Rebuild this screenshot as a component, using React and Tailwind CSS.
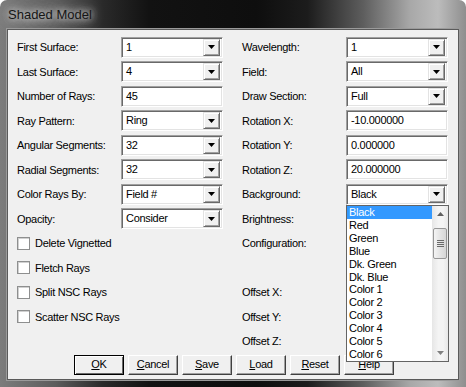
import React from "react";

const Arrow = ({ color = "#000" }) => (
  <svg width="7" height="4" viewBox="0 0 7 4">
    <path d="M0 0h7L3.5 4z" fill={color} />
  </svg>
);

const DropButton = () => (
  <div className="ml-auto w-[17px] h-[17px] bg-[#f0f0f0] flex items-center justify-center border border-t-[#e3e3e3] border-l-[#e3e3e3] border-b-[#696969] border-r-[#696969] shadow-[inset_1px_1px_0_#ffffff,inset_-1px_-1px_0_#a0a0a0]">
    <Arrow />
  </div>
);

const Field = ({ value, combo = false }) => (
  <div className="w-[102px] h-[21px] bg-white flex items-center border border-t-[#a0a0a0] border-l-[#a0a0a0] border-b-white border-r-white shadow-[inset_1px_1px_0_#696969,inset_-1px_-1px_0_#e3e3e3] pl-[4px] pr-[2px]">
    <span className="leading-none">{value}</span>
    {combo && <DropButton />}
  </div>
);

const Row = ({ label, children }) => (
  <div className="h-[24.5px] flex items-center">
    <span className="w-[104px]">{label}</span>
    {children}
  </div>
);

const Check = ({ label }) => (
  <div className="h-[24.5px] flex items-center">
    <div className="w-[13px] h-[13px] bg-white border border-[#8e8f8f] shadow-[inset_1px_1px_0_#d0d0d0]" />
    <span className="ml-[5px]">{label}</span>
  </div>
);

const Btn = ({ k, rest, main = false }) => (
  <div
    className={`w-[50px] h-[20px] flex items-center justify-center bg-[#f0f0f0] ${
      main
        ? "border border-[#000] shadow-[inset_1px_1px_0_#ffffff,inset_-1px_-1px_0_#696969]"
        : "border border-t-white border-l-white border-b-[#404040] border-r-[#404040] shadow-[inset_-1px_-1px_0_#a0a0a0]"
    }`}
  >
    <span>
      <span className="underline underline-offset-[1px]">{k}</span>
      {rest}
    </span>
  </div>
);

const colors = [
  "Black",
  "Red",
  "Green",
  "Blue",
  "Dk. Green",
  "Dk. Blue",
  "Color 1",
  "Color 2",
  "Color 3",
  "Color 4",
  "Color 5",
  "Color 6",
];

export default function App() {
  return (
    <div className="w-[466px] h-[387px] overflow-hidden rounded-t-[7px] font-['Liberation_Sans',Arial,sans-serif] text-[11px] tracking-[-0.3px] text-black bg-[linear-gradient(to_right,#7c7c7c_0%,#5c5c5c_12%,#2a2a2a_22%,#121212_32%,#0e0e0e_55%,#1c1c1c_66%,#5e5e5e_78%,#a8a8a8_88%,#bcbcbc_94%,#8e8e8e_100%)]">
      {/* Title bar */}
      <div className="h-[29px] flex items-center pl-[8px]">
        <span className="text-[13px] tracking-normal text-[#151515] [text-shadow:0_0_6px_#d8d8d8,0_0_10px_#c8c8c8,0_0_16px_#b0b0b0]">
          Shaded Model
        </span>
      </div>

      {/* Client area */}
      <div className="relative mx-[7px] h-[351px] bg-[#f0f0f0] border border-[#5a5a5a] shadow-[0_0_0_1px_#9a9a9a]">
        <div className="flex pl-[9px] pt-[5px]">
          <div className="w-[206px] flex flex-col">
            <Row label="First Surface:"><Field value="1" combo /></Row>
            <Row label="Last Surface:"><Field value="4" combo /></Row>
            <Row label="Number of Rays:"><Field value="45" /></Row>
            <Row label="Ray Pattern:"><Field value="Ring" combo /></Row>
            <Row label="Angular Segments:"><Field value="32" combo /></Row>
            <Row label="Radial Segments:"><Field value="32" combo /></Row>
            <Row label="Color Rays By:"><Field value="Field #" combo /></Row>
            <Row label="Opacity:"><Field value="Consider" combo /></Row>
            <Check label="Delete Vignetted" />
            <Check label="Fletch Rays" />
            <Check label="Split NSC Rays" />
            <Check label="Scatter NSC Rays" />
          </div>
          <div className="ml-[19px] w-[206px] flex flex-col">
            <Row label="Wavelength:"><Field value="1" combo /></Row>
            <Row label="Field:"><Field value="All" combo /></Row>
            <Row label="Draw Section:"><Field value="Full" combo /></Row>
            <Row label="Rotation X:"><Field value="-10.000000" /></Row>
            <Row label="Rotation Y:"><Field value="0.000000" /></Row>
            <Row label="Rotation Z:"><Field value="20.000000" /></Row>
            <Row label="Background:"><Field value="Black" combo /></Row>
            <Row label="Brightness:" />
            <Row label="Configuration:" />
            <Row label="" />
            <Row label="Offset X:" />
            <Row label="Offset Y:" />
            <Row label="Offset Z:" />
          </div>
        </div>

        {/* Buttons */}
        <div className="flex gap-[4px] pl-[66px] mt-[1px]">
          <Btn k="O" rest="K" main />
          <Btn k="C" rest="ancel" />
          <Btn k="S" rest="ave" />
          <Btn k="L" rest="oad" />
          <Btn k="R" rest="eset" />
          <Btn k="H" rest="elp" />
        </div>

        {/* Open dropdown list */}
        <div className="absolute left-[338px] top-[175px] w-[103px] h-[157px] bg-white border border-[#646464] flex">
          <div className="flex-1 flex flex-col">
            {colors.map((c, i) => (
              <div
                key={c}
                className={`h-[13px] flex items-center pl-[2px] leading-none ${
                  i === 0 ? "bg-[#3399ff] text-white" : ""
                }`}
              >
                {c}
              </div>
            ))}
          </div>
          <div className="w-[16px] flex flex-col bg-[linear-gradient(to_right,#e6e6e6,#f4f4f4_40%,#f4f4f4_70%,#e8e8e8)]">
            <div className="h-[16px] flex items-center justify-center">
              <div className="rotate-180">
                <Arrow color="#606060" />
              </div>
            </div>
            <div className="mt-[6px] mx-[1px] h-[31px] rounded-[2px] border border-[#979797] bg-[linear-gradient(to_right,#f4f4f4,#e4e4e4_50%,#d6d6d6)] flex flex-col items-center justify-center gap-[1px]">
              <div className="w-[7px] h-[1px] bg-[#6a6a6a]" />
              <div className="w-[7px] h-[1px] bg-[#6a6a6a]" />
              <div className="w-[7px] h-[1px] bg-[#6a6a6a]" />
              <div className="w-[7px] h-[1px] bg-[#6a6a6a]" />
            </div>
            <div className="mt-auto h-[16px] flex items-center justify-center">
              <Arrow color="#808080" />
            </div>
          </div>
        </div>
      </div>
    </div>
  );
}
